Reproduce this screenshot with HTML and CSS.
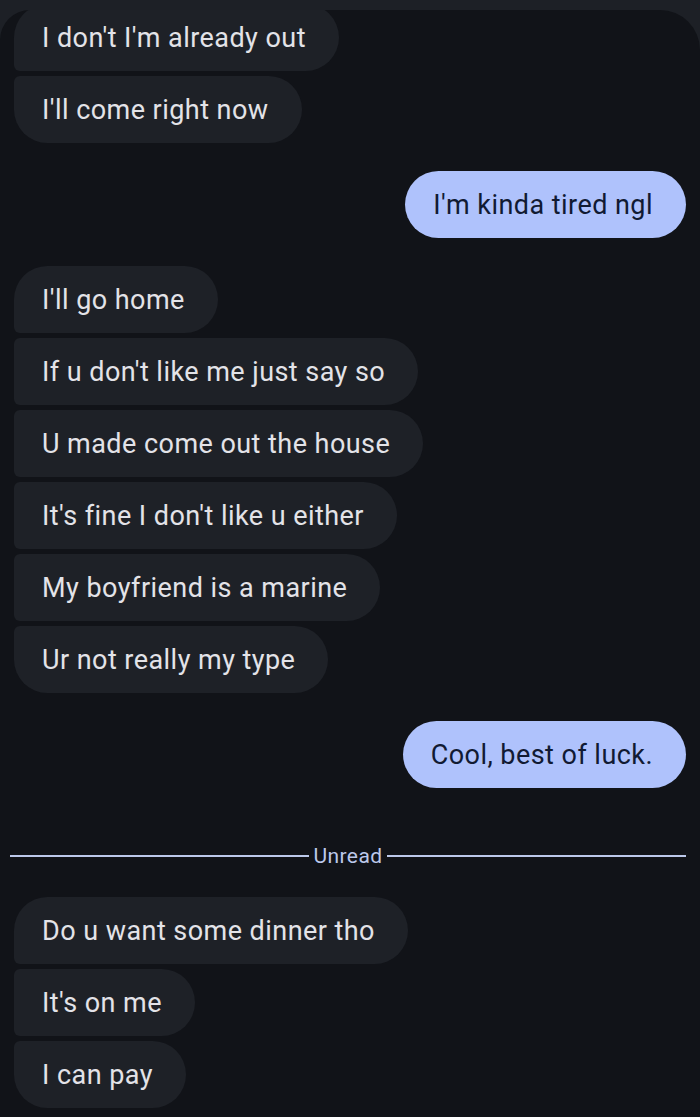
FILE: index.html
```html
<!DOCTYPE html>
<html lang="en">
<head>
  <meta charset="UTF-8">
  <meta name="viewport" content="width=device-width, initial-scale=1.0">
  <title>Messages</title>
  <link rel="stylesheet" href="styles.css">
</head>
<body>

  <div class="panel">
    <div class="thread">

      <div class="group in first-group">
        <div class="bubble">I don't I'm already out</div>
        <div class="bubble">I'll come right now</div>
      </div>

      <div class="group out">
        <div class="bubble">I'm kinda tired ngl</div>
      </div>

      <div class="group in">
        <div class="bubble">I'll go home</div>
        <div class="bubble">If u don't like me just say so</div>
        <div class="bubble">U made come out the house</div>
        <div class="bubble">It's fine I don't like u either</div>
        <div class="bubble">My boyfriend is a marine</div>
        <div class="bubble">Ur not really my type</div>
      </div>

      <div class="group out">
        <div class="bubble">Cool, best of luck.</div>
      </div>

      <div class="divider">
        <span class="line"></span>
        <span class="label">Unread</span>
        <span class="line"></span>
      </div>

      <div class="group in">
        <div class="bubble">Do u want some dinner tho</div>
        <div class="bubble">It's on me</div>
        <div class="bubble">I can pay</div>
      </div>

    </div>
  </div>

</body>
</html>
```

FILE: styles.css
```css
body {
  margin: 0;
  background-color: #1d2026;
  font-family: Roboto, "Noto Sans", sans-serif;
  height: 1117px;
  overflow: hidden;
}
.panel {
  margin-top: 10px;
  height: 1107px;
  background-color: #111318;
  border-top-left-radius: 30px;
  border-top-right-radius: 40px;
  overflow: hidden;
}
.thread {
  display: flex;
  flex-direction: column;
  padding: 0 14px;
}
.group {
  display: flex;
  flex-direction: column;
  gap: 5px;
  margin-top: 28px;
}
.first-group {
  margin-top: -6px;
}
.in {
  align-items: flex-start;
}
.out {
  align-items: flex-end;
}
.bubble {
  font-size: 27px;
  line-height: 31px;
  padding: 19px 33px 17px 28px;
  border-radius: 34px;
  letter-spacing: 0.45px;
}
.in .bubble {
  background-color: #1e2127;
  color: #e3e3e8;
}
.in .bubble:not(:first-child) {
  border-top-left-radius: 6px;
}
.in .bubble:not(:last-child) {
  border-bottom-left-radius: 6px;
}
.out .bubble {
  background-color: #afc2fc;
  color: #111a33;
}
.divider {
  display: flex;
  align-items: center;
  gap: 5px;
  margin: 56px 0 0 -4px;
  height: 24px;
}
.divider .line {
  flex: 1;
  height: 2px;
  background-color: #bcc8ea;
}
.divider .label {
  color: #bcc8ea;
  font-size: 21px;
  letter-spacing: 0.4px;
}
.divider + .group {
  margin-top: 29px;
}
```
